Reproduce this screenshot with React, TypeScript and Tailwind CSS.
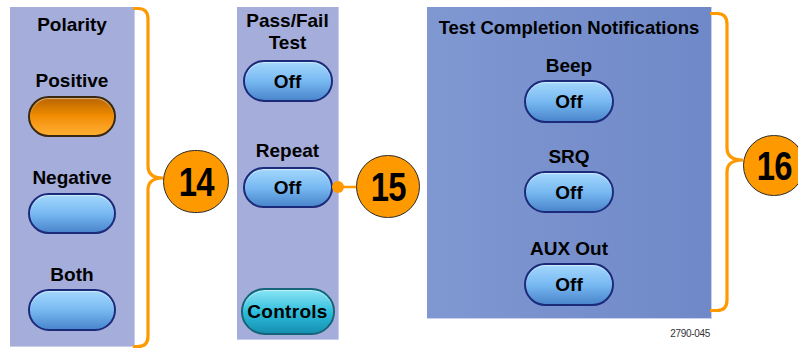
import React from 'react';

type Variant = 'blue' | 'orange' | 'cyan';

const variantClass: Record<Variant, string> = {
  blue: 'bg-gradient-to-b from-[#a3d7fc] via-[#78b9f2] to-[#4b86cc] border-[#1c2a7a]',
  orange: 'bg-gradient-to-b from-[#b86400] via-[#f28e00] to-[#ffae30] border-[#3a2810]',
  cyan: 'bg-gradient-to-b from-[#86e4f5] via-[#2cbfdc] to-[#1790b2] border-[#15647a]',
};

function Pill({ label, variant = 'blue', w = 'w-[88px]', h = 'h-[41px]', className = '' }: {
  label?: string;
  variant?: Variant;
  w?: string;
  h?: string;
  className?: string;
}) {
  return (
    <div
      className={`${w} ${h} ${className} shrink-0 rounded-full border-2 flex items-center justify-center text-black font-bold leading-none shadow-[inset_0_1px_1px_rgba(255,255,255,0.5)] ${variantClass[variant]}`}
    >
      {label}
    </div>
  );
}

function Callout({ n, w, h, mt }: { n: string; w: string; h: string; mt: string }) {
  return (
    <div
      className={`${w} ${h} ${mt} shrink-0 rounded-full bg-[#ff9900] border border-[#2b2b2b] flex items-center justify-center text-black font-bold text-[40px] leading-none`}
    >
      <span className="scale-x-[0.82] tracking-[-1px]">{n}</span>
    </div>
  );
}

export default function App() {
  return (
    <div className="w-[798px] h-[349px] bg-white overflow-hidden flex items-start font-['Liberation_Sans',Arial,sans-serif] text-black">
      {/* Polarity */}
      <div className="ml-[10px] mt-[7px] w-[125px] h-[340px] shrink-0 bg-[#a5addb] border-r border-b border-[#c9cdec] flex flex-col items-center pt-[8px] font-bold text-[19px] leading-[20px]">
        <span>Polarity</span>
        <span className="mt-[36px]">Positive</span>
        <Pill variant="orange" className="mt-[5px]" />
        <span className="mt-[31px]">Negative</span>
        <Pill className="mt-[5px]" />
        <span className="mt-[31px]">Both</span>
        <Pill className="mt-[4px]" h="h-[42px]" />
      </div>

      <svg width="28" height="349" className="shrink-0 overflow-visible" fill="none">
        <path
          d="M -2 8.5 H 3 Q 13 8.5 13 19 V 166 Q 13 178 28 178 Q 13 178 13 190 V 336 Q 13 346.5 3 346.5 H -2"
          stroke="#ff9900"
          strokeWidth="3.2"
        />
      </svg>
      <Callout n="14" w="w-[66px]" h="h-[63px]" mt="mt-[150px]" />

      {/* Pass/Fail */}
      <div className="ml-[8px] mt-[7px] w-[102px] h-[333px] shrink-0 bg-[#a5addb] border-r border-b border-[#c9cdec] flex flex-col items-center pt-[3px] font-bold text-[19px]">
        <span className="leading-[22px] text-center">Pass/Fail<br />Test</span>
        <Pill label="Off" w="w-[90px]" h="h-[42px]" className="mt-[6px]" />
        <span className="mt-[39px] leading-[20px]">Repeat</span>
        <Pill label="Off" w="w-[90px]" className="mt-[6px]" />
        <Pill label="Controls" variant="cyan" w="w-[94px]" h="h-[47px]" className="mt-[80px] text-[19px] tracking-[0.3px]" />
      </div>

      <div className="mt-[155px] h-[63px] flex items-center shrink-0">
        <svg width="17" height="63" className="shrink-0 overflow-visible">
          <line x1="-1" y1="32" x2="17" y2="32" stroke="#ff9900" strokeWidth="2.5" />
          <circle cx="-1" cy="32" r="6" fill="#ff9900" />
        </svg>
        <Callout n="15" w="w-[64px]" h="h-[63px]" mt="mt-0" />
      </div>

      {/* Test Completion Notifications */}
      <div className="ml-[7px] mt-[7px] w-[285px] shrink-0 flex flex-col">
        <div className="h-[312px] bg-gradient-to-r from-[#8098d2] to-[#6f89c8] border-r border-b border-[#c9d1ec] flex flex-col items-center pt-[11px] font-bold text-[19px] leading-[20px]">
          <span className="text-[18.5px]">Test Completion Notifications</span>
          <span className="mt-[18px]">Beep</span>
          <Pill label="Off" w="w-[90px]" h="h-[43px]" className="mt-[4px]" />
          <span className="mt-[24px]">SRQ</span>
          <Pill label="Off" w="w-[90px]" h="h-[42px]" className="mt-[4px]" />
          <span className="mt-[26px]">AUX Out</span>
          <Pill label="Off" w="w-[90px]" h="h-[43px]" className="mt-[4px]" />
        </div>
        <div className="mt-[9px] pr-[2px] text-right text-[10px] leading-[12px] text-[#333] tracking-[-0.3px]">2790-045</div>
      </div>

      <svg width="31" height="349" className="shrink-0 overflow-visible" fill="none">
        <path
          d="M -2 13.5 H 5 Q 15 13.5 15 24 V 148 Q 15 160 31 160 Q 15 160 15 172 V 300 Q 15 310.5 5 310.5 H -2"
          stroke="#ff9900"
          strokeWidth="3.2"
        />
      </svg>
      <Callout n="16" w="w-[62px]" h="h-[61px]" mt="mt-[135px]" />
    </div>
  );
}
